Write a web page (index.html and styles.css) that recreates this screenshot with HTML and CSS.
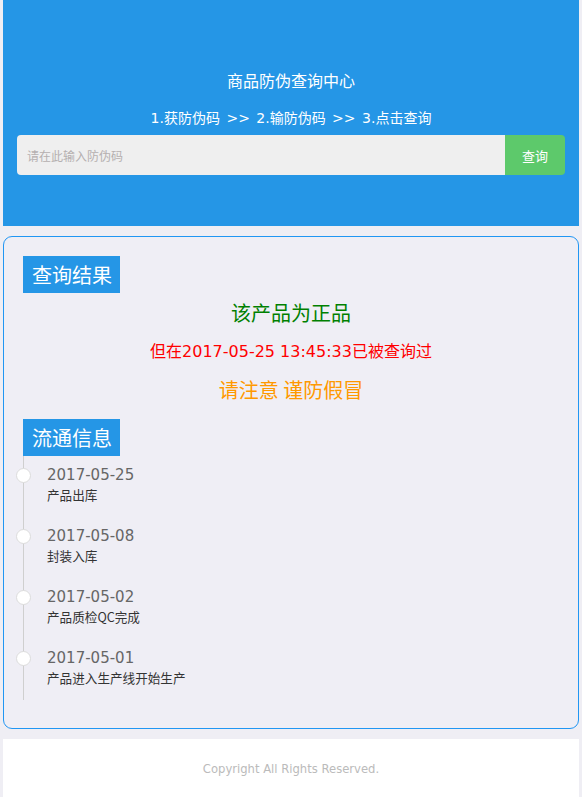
FILE: index.html
```html
<!DOCTYPE html>
<html lang="zh-CN">
<head>
<meta charset="utf-8">
<title>商品防伪查询中心</title>
<link rel="stylesheet" href="styles.css">
</head>
<body>
<div class="page">
  <header class="hero">
    <h1 class="hero-title">商品防伪查询中心</h1>
    <p class="hero-steps">1.获防伪码 &gt;&gt; 2.输防伪码 &gt;&gt; 3.点击查询</p>
    <form class="search">
      <input class="search-input" type="text" placeholder="请在此输入防伪码">
      <button class="search-btn" type="button">查询</button>
    </form>
  </header>

  <section class="card">
    <div class="tag">查询结果</div>
    <div class="result">
      <p class="res-ok">该产品为正品</p>
      <p class="res-warn">但在2017-05-25 13:45:33已被查询过</p>
      <p class="res-note">请注意 谨防假冒</p>
    </div>

    <div class="tag tag-second">流通信息</div>
    <ul class="timeline">
      <li class="tl-item">
        <span class="tl-dot"></span>
        <div class="tl-date">2017-05-25</div>
        <div class="tl-desc">产品出库</div>
      </li>
      <li class="tl-item">
        <span class="tl-dot"></span>
        <div class="tl-date">2017-05-08</div>
        <div class="tl-desc">封装入库</div>
      </li>
      <li class="tl-item">
        <span class="tl-dot"></span>
        <div class="tl-date">2017-05-02</div>
        <div class="tl-desc">产品质检QC完成</div>
      </li>
      <li class="tl-item">
        <span class="tl-dot"></span>
        <div class="tl-date">2017-05-01</div>
        <div class="tl-desc">产品进入生产线开始生产</div>
      </li>
    </ul>
  </section>

  <footer class="footer">Copyright All Rights Reserved.</footer>
</div>
</body>
</html>
```

FILE: styles.css
```css
* { box-sizing: border-box; }

html, body {
  margin: 0;
  padding: 0;
  background: #efeef4;
}

body {
  font-family: "Noto Sans CJK SC", "Noto Sans", sans-serif;
  color: #333;
}

.page {
  padding: 0 3px;
}

.hero {
  background: #2596e6;
  height: 226px;
  padding: 70px 14px 0 14px;
  text-align: center;
  color: #fff;
}

.hero-title {
  margin: 0;
  font-size: 16px;
  font-weight: normal;
  line-height: 20px;
}

.hero-steps {
  margin: 18px 0 0 0;
  font-family: "DejaVu Sans", "Noto Sans CJK SC", sans-serif;
  font-size: 14px;
  word-spacing: 2px;
  line-height: 20px;
}

.search {
  display: flex;
  margin-top: 7px;
  height: 40px;
}

.search-input {
  flex: 1;
  min-width: 0;
  border: none;
  outline: none;
  background: #efefef;
  border-radius: 4px 0 0 4px;
  padding: 0 10px;
  font-family: inherit;
  font-size: 12px;
  color: #333;
}

.search-input::placeholder {
  color: #b5b0b0;
}

.search-btn {
  width: 60px;
  border: none;
  background: #5dc96b;
  color: #fff;
  border-radius: 0 4px 4px 0;
  font-family: inherit;
  font-size: 13px;
  padding: 0;
}

.card {
  margin-top: 10px;
  border: 1px solid #2196f3;
  border-radius: 9px;
  padding: 19px 19px 28px 19px;
  background: #efeef5;
}

.tag {
  display: inline-block;
  background: #2596e6;
  color: #fff;
  font-size: 20px;
  line-height: 37px;
  height: 37px;
  padding: 0 8px 0 9px;
}

.tag-second {
  margin-top: 11px;
}

.result {
  text-align: center;
  margin-top: 1px;
}

.result p {
  margin: 0;
  line-height: 38px;
}

.res-ok {
  color: #008000;
  font-size: 20px;
}

.result .res-warn {
  color: #ff0000;
  font-family: "DejaVu Sans", "Noto Sans CJK SC", sans-serif;
  font-size: 16px;
  line-height: 36px;
  padding-top: 2px;
}

.result .res-note {
  color: #ff9900;
  font-size: 20px;
  line-height: 37px;
  padding-top: 1px;
}

.timeline {
  list-style: none;
  margin: 0;
  padding: 8px 0 13px 0;
  border-left: 1px solid #cfcfcf;
  display: flex;
  flex-direction: column;
  gap: 21px;
}

.tl-item {
  position: relative;
  padding-left: 23px;
}

.tl-dot {
  position: absolute;
  left: -8px;
  top: 4px;
  width: 15px;
  height: 15px;
  border-radius: 50%;
  background: #fff;
  border: 1px solid #dcdcdc;
}

.tl-date {
  font-family: "DejaVu Sans", sans-serif;
  font-size: 15px;
  line-height: 20px;
  padding-top: 1px;
  color: #666;
}

.tl-desc {
  font-size: 12.6px;
  line-height: 19px;
  color: #333;
}

.footer {
  margin-top: 10px;
  background: #fff;
  height: 60px;
  padding-top: 21px;
  line-height: 18px;
  text-align: center;
  font-family: "DejaVu Sans", sans-serif;
  font-size: 11.6px;
  color: #bbb;
}
```
